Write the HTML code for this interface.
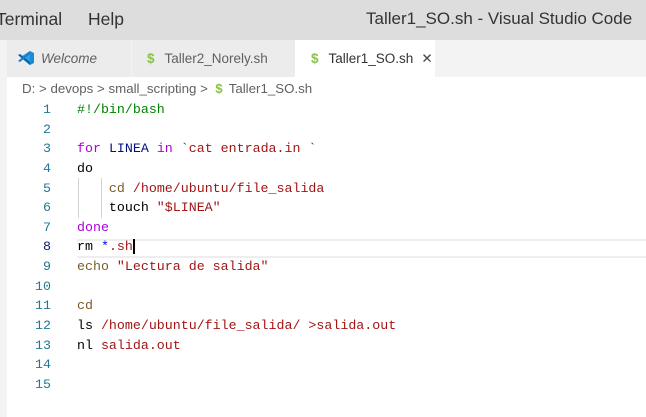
<!DOCTYPE html>
<html><head><meta charset="utf-8"><style>
*{margin:0;padding:0;box-sizing:border-box}
body{width:646px;height:417px;overflow:hidden;background:#fff;position:relative;font-family:"Liberation Sans",sans-serif}
.title{position:absolute;left:0;top:0;width:646px;height:40px;background:#dddddd;color:#333;font-size:17.5px;white-space:nowrap}
.title span{position:absolute;top:9px}
.tabs{position:absolute;left:0;top:40px;width:646px;height:37px;background:#f3f3f3}
.tab{position:absolute;top:0;height:37px;background:#ececec;font-size:13.5px;color:#616161;line-height:37px;white-space:nowrap}
.dollar{color:#8dc149;font-weight:bold;margin-right:10px}
.strip{position:absolute;left:0;top:40px;width:7px;height:377px;background:#f3f3f3}
.bc{position:absolute;left:22px;top:81px;font-size:13.3px;color:#616161;white-space:nowrap}
.ln{position:absolute;left:7px;width:44px;text-align:right;font-family:"Liberation Mono",monospace;font-size:13.3px;color:#237893;line-height:19.64px}
.code{position:absolute;left:77px;font-family:"Liberation Mono",monospace;font-size:13.3px;line-height:19.64px;white-space:pre;color:#000}
.k{color:#af00db}.v{color:#001080}.s{color:#a31515}.f{color:#795e26}.c{color:#008000}.b{color:#0000ff}
.hl{position:absolute;left:77px;top:238.5px;width:569px;height:19px;border-top:2px solid #eeeeee;border-bottom:2px solid #eeeeee}
.guide{position:absolute;width:1px;background:#d3d3d3}
</style></head><body>
<div class="title"><span style="left:-4px">Terminal</span><span style="left:88px">Help</span><span style="left:366px;font-size:17px">Taller1_SO.sh - Visual Studio Code</span></div>
<div class="tabs">
<div class="tab" style="left:7px;width:124px;padding-left:10px"><svg width="18" height="16" viewBox="0 0 18 16" style="vertical-align:-3px;margin-right:6px"><path d="M13 1 L17 3 V13 L13 15 L5 8 Z" fill="#1f8ad2"/><path d="M13 1 L13 15 L3 7 Z" fill="#2ba3ee" opacity=".9"/><path d="M1 5 L3 4 L13 12 L13 15 Z" fill="#0065a9"/><path d="M1 11 L3 12 L13 4 L13 1 Z" fill="#1c7cc4"/></svg><i>Welcome</i></div>
<div class="tab" style="left:132px;width:163px;padding-left:15px"><span class="dollar">$</span>Taller2_Norely.sh</div>
<div class="tab" style="left:295px;width:140px;background:#fff;color:#333;padding-left:16px"><span class="dollar">$</span>Taller1_SO.sh<span style="margin-left:8px;color:#444">✕</span></div>
</div>
<div class="strip"></div>
<div class="bc">D: &gt; devops &gt; small_scripting &gt; &nbsp;<span class="dollar" style="margin-right:6px">$</span>Taller1_SO.sh</div>
<div class="hl"></div>
<div class="guide" style="left:78px;top:178px;height:40px"></div>
<div class="guide" style="left:101px;top:178px;height:40px"></div>
<div class="ln" style="top:100px">1<br>2<br>3<br>4<br>5<br>6<br>7<br><span style="color:#0b216f">8</span><br>9<br>10<br>11<br>12<br>13<br>14<br>15</div>
<div class="code" style="top:100px"><span class="c">#!/bin/bash</span>

<span class="k">for</span> <span class="v">LINEA</span> <span class="k">in</span> <span class="s">`cat entrada.in `</span>
do
    <span class="f">cd</span> <span class="s">/home/ubuntu/file_salida</span>
    touch <span class="s">"$LINEA"</span>
<span class="k">done</span>
rm <span class="b">*</span><span class="s">.sh</span><span style="border-left:2px solid #000;margin-left:0"></span>
<span class="f">echo</span> <span class="s">"Lectura de salida"</span>

<span class="f">cd</span>
ls <span class="s">/home/ubuntu/file_salida/ &gt;salida.out</span>
nl <span class="s">salida.out</span>
</div>
</body></html>
